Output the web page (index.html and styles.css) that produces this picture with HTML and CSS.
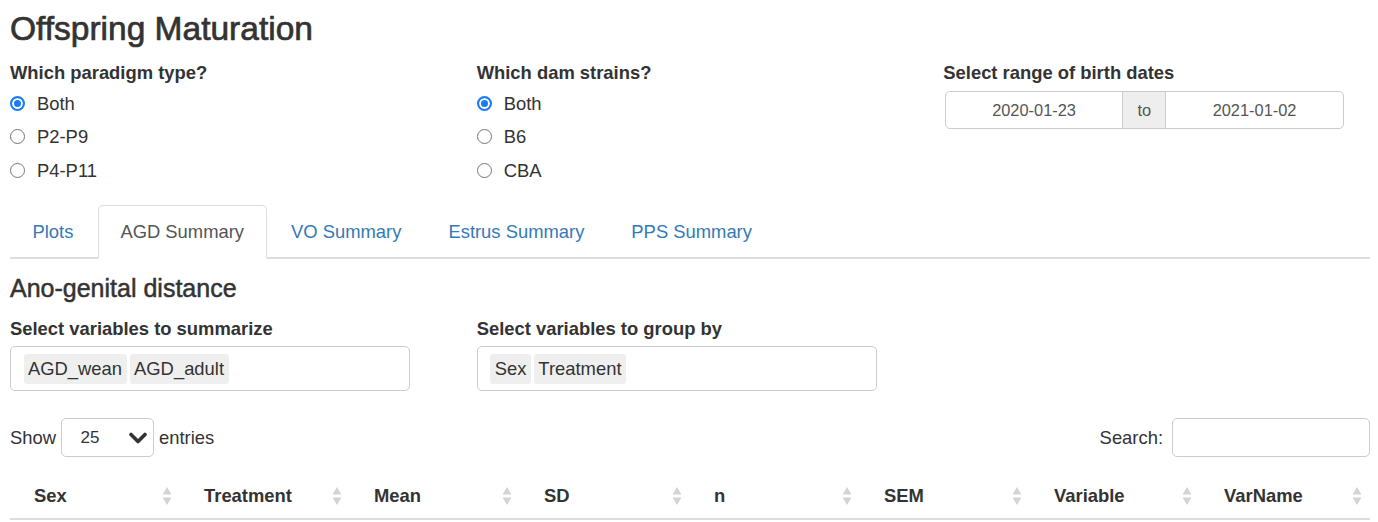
FILE: index.html
```html
<!DOCTYPE html>
<html>
<head>
<meta charset="utf-8">
<title>Offspring Maturation</title>
<link rel="stylesheet" href="styles.css">
</head>
<body>
<div class="page">
  <h1 class="title">Offspring Maturation</h1>

  <div class="filters">
    <div class="col">
      <div class="label">Which paradigm type?</div>
      <div class="radio"><span class="dot on"></span><span>Both</span></div>
      <div class="radio"><span class="dot"></span><span>P2-P9</span></div>
      <div class="radio"><span class="dot"></span><span>P4-P11</span></div>
    </div>
    <div class="col">
      <div class="label">Which dam strains?</div>
      <div class="radio"><span class="dot on"></span><span>Both</span></div>
      <div class="radio"><span class="dot"></span><span>B6</span></div>
      <div class="radio"><span class="dot"></span><span>CBA</span></div>
    </div>
    <div class="col">
      <div class="label">Select range of birth dates</div>
      <div class="daterange">
        <div class="date">2020-01-23</div>
        <div class="addon">to</div>
        <div class="date">2021-01-02</div>
      </div>
    </div>
  </div>

  <ul class="tabs">
    <li><a>Plots</a></li>
    <li class="active"><a>AGD Summary</a></li>
    <li><a>VO Summary</a></li>
    <li><a>Estrus Summary</a></li>
    <li><a>PPS Summary</a></li>
  </ul>

  <h2 class="section">Ano-genital distance</h2>

  <div class="selects">
    <div class="col">
      <div class="label">Select variables to summarize</div>
      <div class="multi"><span class="tag">AGD_wean</span><span class="tag">AGD_adult</span></div>
    </div>
    <div class="col">
      <div class="label">Select variables to group by</div>
      <div class="multi"><span class="tag">Sex</span><span class="tag">Treatment</span></div>
    </div>
  </div>

  <div class="dt-controls">
    <div class="length">
      <span>Show</span>
      <div class="sel"><span class="val">25</span>
        <svg class="chev" width="18" height="12" viewBox="0 0 18 12"><path d="M2 2.5 L9 9.5 L16 2.5" fill="none" stroke="#333" stroke-width="3.6" stroke-linecap="round" stroke-linejoin="round"/></svg>
      </div>
      <span>entries</span>
    </div>
    <div class="search">
      <span>Search:</span>
      <div class="search-box"></div>
    </div>
  </div>

  <table class="dt">
    <thead>
      <tr>
        <th><div class="th-in"><span>Sex</span><svg class="sort" width="10" height="20" viewBox="0 0 10 20"><path d="M5 1 L9.5 8.5 L0.5 8.5 Z M5 19 L9.5 11.5 L0.5 11.5 Z" fill="#d4d4d4"/></svg></div></th>
        <th><div class="th-in"><span>Treatment</span><svg class="sort" width="10" height="20" viewBox="0 0 10 20"><path d="M5 1 L9.5 8.5 L0.5 8.5 Z M5 19 L9.5 11.5 L0.5 11.5 Z" fill="#d4d4d4"/></svg></div></th>
        <th><div class="th-in"><span>Mean</span><svg class="sort" width="10" height="20" viewBox="0 0 10 20"><path d="M5 1 L9.5 8.5 L0.5 8.5 Z M5 19 L9.5 11.5 L0.5 11.5 Z" fill="#d4d4d4"/></svg></div></th>
        <th><div class="th-in"><span>SD</span><svg class="sort" width="10" height="20" viewBox="0 0 10 20"><path d="M5 1 L9.5 8.5 L0.5 8.5 Z M5 19 L9.5 11.5 L0.5 11.5 Z" fill="#d4d4d4"/></svg></div></th>
        <th><div class="th-in"><span>n</span><svg class="sort" width="10" height="20" viewBox="0 0 10 20"><path d="M5 1 L9.5 8.5 L0.5 8.5 Z M5 19 L9.5 11.5 L0.5 11.5 Z" fill="#d4d4d4"/></svg></div></th>
        <th><div class="th-in"><span>SEM</span><svg class="sort" width="10" height="20" viewBox="0 0 10 20"><path d="M5 1 L9.5 8.5 L0.5 8.5 Z M5 19 L9.5 11.5 L0.5 11.5 Z" fill="#d4d4d4"/></svg></div></th>
        <th><div class="th-in"><span>Variable</span><svg class="sort" width="10" height="20" viewBox="0 0 10 20"><path d="M5 1 L9.5 8.5 L0.5 8.5 Z M5 19 L9.5 11.5 L0.5 11.5 Z" fill="#d4d4d4"/></svg></div></th>
        <th><div class="th-in"><span>VarName</span><svg class="sort" width="10" height="20" viewBox="0 0 10 20"><path d="M5 1 L9.5 8.5 L0.5 8.5 Z M5 19 L9.5 11.5 L0.5 11.5 Z" fill="#d4d4d4"/></svg></div></th>
      </tr>
    </thead>
  </table>
</div>
</body>
</html>
```

FILE: styles.css
```css
* { box-sizing: border-box; }

body {
  margin: 0;
  font-family: "Liberation Sans", Arial, Helvetica, sans-serif;
  font-size: 18.4px;
  line-height: 25px;
  color: #333;
  background: #fff;
  overflow: hidden;
}

.page {
  padding: 0 8px 0 10px;
}

.title {
  margin: 9px 0 0;
  font-size: 33.5px;
  line-height: 40px;
  font-weight: 400;
  color: #333;
  -webkit-text-stroke: 0.7px #333;
}

.filters {
  display: grid;
  grid-template-columns: 466.67px 466.67px 1fr;
  margin-top: 10.5px;
}

.label {
  font-weight: 700;
  line-height: 25px;
  white-space: nowrap;
}

.filters .label {
  margin-bottom: 2px;
}

.radio {
  display: flex;
  align-items: center;
  height: 33.5px;
  gap: 12px;
}

.dot {
  width: 15px;
  height: 15px;
  border-radius: 50%;
  border: 1.5px solid #767676;
  background: #fff;
  flex: none;
}

.dot.on {
  border: 2px solid #1a7cf5;
  background: #1a7cf5;
  box-shadow: inset 0 0 0 2px #fff;
}

.daterange {
  display: flex;
  margin: 6.5px 0 0 1.5px;
  width: 399px;
  height: 38px;
  border: 1.5px solid #ccc;
  border-radius: 5px;
  overflow: hidden;
  font-size: 16.4px;
}

.date {
  flex: 1;
  display: flex;
  align-items: center;
  justify-content: center;
  color: #555;
}

.addon {
  width: 44px;
  display: flex;
  align-items: center;
  justify-content: center;
  background: #eee;
  border-left: 1.5px solid #ccc;
  border-right: 1.5px solid #ccc;
  color: #555;
}

.tabs {
  list-style: none;
  margin: 18px 0 0;
  padding: 0;
  display: flex;
  width: 1360px;
  border-bottom: 2px solid #ddd;
}

.tabs li {
  margin-bottom: -2px;
  margin-right: 2px;
}

.tabs a {
  display: block;
  height: 54px;
  line-height: 52px;
  padding: 0 21.5px;
  border: 1.5px solid transparent;
  border-bottom: 0;
  border-radius: 5px 5px 0 0;
  color: #337ab7;
  white-space: nowrap;
}

.tabs .active a {
  color: #555;
  background: #fff;
  border-color: #ddd;
  border-bottom: 2px solid #fff;
}

.section {
  margin: 14px 0 0;
  font-size: 25px;
  line-height: 30px;
  font-weight: 400;
  color: #333;
  -webkit-text-stroke: 0.5px #333;
}

.selects {
  display: grid;
  grid-template-columns: 466.67px 466.67px;
  margin-top: 12.5px;
}

.multi {
  margin-top: 5.5px;
  width: 400px;
  height: 45px;
  border: 1.5px solid #ccc;
  border-radius: 5px;
  display: flex;
  align-items: center;
  gap: 3px;
  padding-left: 12.5px;
}

.tag {
  background: #efefef;
  border-radius: 3px;
  height: 30px;
  line-height: 30px;
  padding: 0 4.5px;
  color: #333;
}

.dt-controls {
  display: flex;
  justify-content: space-between;
  align-items: center;
  width: 1360px;
  margin-top: 27px;
  height: 39px;
}

.length {
  display: flex;
  align-items: center;
}

.sel {
  width: 93px;
  height: 39px;
  margin: 0 5px 0 5px;
  border: 1.5px solid #ccc;
  border-radius: 5px;
  display: flex;
  align-items: center;
  justify-content: space-between;
  padding: 0 6px 0 18.5px;
  font-size: 17px;
}

.search {
  display: flex;
  align-items: center;
  gap: 9px;
}

.search-box {
  width: 198px;
  height: 39px;
  border: 1.5px solid #ccc;
  border-radius: 5px;
}

.dt {
  margin-top: 13px;
  width: 1360px;
  border-collapse: collapse;
  table-layout: fixed;
}

.dt th {
  width: 170px;
  padding: 13px 8px 10px 24px;
  border-bottom: 2px solid #ddd;
  text-align: left;
  font-weight: 700;
}

.th-in {
  display: flex;
  align-items: center;
  justify-content: space-between;
  height: 25px;
}

.sort {
  display: block;
}
```
